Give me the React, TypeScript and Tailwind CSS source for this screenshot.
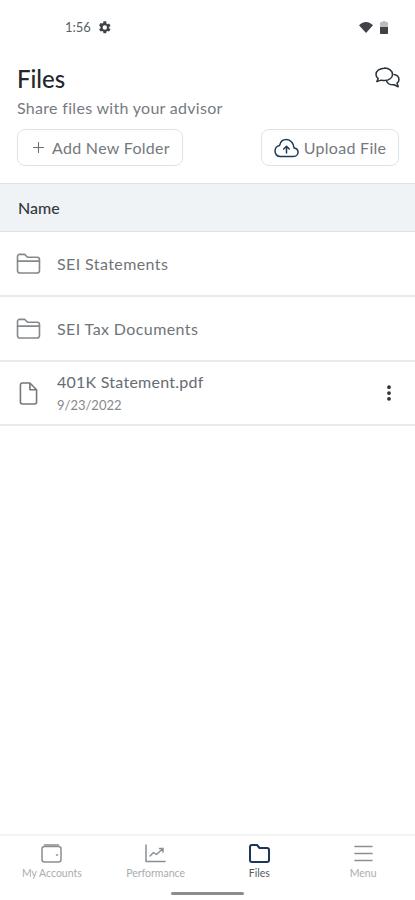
import { Plus, EllipsisVertical } from "lucide-react";

function FolderIcon({ className }: { className?: string }) {
  return (
    <svg className={className} viewBox="0 0 26 22" fill="none" stroke="currentColor" strokeWidth="1.7" strokeLinejoin="round" strokeLinecap="round">
      <path d="M1.5 3.5a2 2 0 0 1 2-2h5.5l3 3h10a2.5 2.5 0 0 1 2.5 2.5v11.5a2.5 2.5 0 0 1-2.5 2.5h-18a2.5 2.5 0 0 1-2.500-2.500z" />
      <path d="M1.5 8.5h23" />
    </svg>
  );
}

function FileIcon({ className }: { className?: string }) {
  return (
    <svg className={className} viewBox="0 0 20 25" fill="none" stroke="currentColor" strokeWidth="1.7" strokeLinejoin="round">
      <path d="M3.5 1.5h8l7 7v13a2 2 0 0 1-2 2h-13a2 2 0 0 1-2-2v-18a2 2 0 0 1 2-2z" />
      <path d="M11.5 1.5v7h7" />
    </svg>
  );
}

function ChatIcon() {
  return (
    <svg className="w-[27px] h-[22px] text-[#27323c]" viewBox="0 0 27 22" fill="none" stroke="currentColor" strokeWidth="1.5" strokeLinejoin="round" strokeLinecap="round">
      <path d="M10.5 1.2c-4.5 0-8.5 2.600-8.500 6.300 0 1.700.8 3.100 2.200 4.200L2.800 14.600l4.400-1.500c1 .3 2.100.5 3.300.5 4.500 0 8-2.800 8-6.200s-3.500-6.400-8-6.400z" />
      <path d="M20 7.500c2.900.6 5 2.500 5 5 0 1.500-.8 2.800-2 3.700l1.200 3.600-4.200-2c-3.300.3-6-.8-7.300-3.300" />
    </svg>
  );
}

function CloudIcon() {
  return (
    <svg className="w-[25px] h-[20px] text-[#1d3b57]" viewBox="0 0 25 20" fill="none" stroke="currentColor" strokeWidth="1.5" strokeLinejoin="round" strokeLinecap="round">
      <path d="M6 18.500h13.500c2.500 0 4.500-1.900 4.500-4.300 0-2.200-1.700-4-3.900-4.300C19.600 5.500 16.500 1.500 12.500 1.500c-3.500 0-6.200 2.600-6.900 5.900C3 7.800 1 10.200 1 13c0 3 2.200 5.500 5 5.500z" />
      <path d="M12.500 15V8.500M9.700 11l2.800-2.800 2.800 2.800" />
    </svg>
  );
}

function StatusBar() {
  return (
    <div className="h-[55px] flex items-center justify-between pl-[65px] pr-[27px] text-[#5a5f63]">
      <div className="flex items-center gap-[6px]">
        <span className="text-[13px]">1:56</span>
        <svg className="w-[15px] h-[15px] text-[#3f4347]" viewBox="0 0 24 24" fill="currentColor">
          <path fillRule="evenodd" d="M19.400 13a7.600 7.600 0 0 0 0-2l2.200-1.700-2.200-3.700-2.600 1a7.500 7.500 0 0 0-1.700-1L14.700 2h-4.400l-.4 2.700a7.500 7.500 0 0 0-1.700 1l-2.600-1-2.200 3.700L5.600 11a7.600 7.600 0 0 0 0 2l-2.200 1.700 2.200 3.700 2.600-1c.5.400 1.100.7 1.700 1l.4 2.700h4.400l.4-2.700c.6-.3 1.200-.6 1.700-1l2.600 1 2.200-3.700zM12.500 15.500a3.500 3.500 0 1 1 0-7 3.500 3.500 0 0 1 0 7z" />
        </svg>
      </div>
      <div className="flex items-center gap-[7px] text-[#3f4347]">
        <svg className="w-[14px] h-[11px]" viewBox="0 0 14 11" fill="currentColor">
          <path d="M0 3.200C1.800 1.300 4.300 0 7 0s5.200 1.300 7 3.200L7 11z" />
        </svg>
        <svg className="w-[8px] h-[13px]" viewBox="0 0 8 13" fill="currentColor">
          <path d="M2.500 0h3v1H7a1 1 0 0 1 1 1v10a1 1 0 0 1-1 1H1a1 1 0 0 1-1-1V2a1 1 0 0 1 1-1h1.500z" fillOpacity="0.35" />
          <path d="M0 6h8v6a1 1 0 0 1-1 1H1a1 1 0 0 1-1-1z" />
        </svg>
      </div>
    </div>
  );
}

function FolderRow({ name }: { name: string }) {
  return (
    <div className="h-[65px] flex items-center pl-[16px] border-b-2 border-[#e8eaec]">
      <FolderIcon className="w-[25px] h-[21px] text-[#85898c] mr-[16px]" />
      <span className="text-[16px] text-[#6f7478] tracking-[0.4px] pt-[1px]">{name}</span>
    </div>
  );
}

function NavItem({ label, active, children }: { label: string; active?: boolean; children: React.ReactNode }) {
  return (
    <div className="flex-1 flex flex-col items-center">
      <div className="h-[24px] flex items-center justify-center">{children}</div>
      <span className={active ? "mt-[1px] text-[10.5px] leading-[14px] text-[#555a5f]" : "mt-[1px] text-[10.5px] leading-[14px] text-[#a9acaf]"}>{label}</span>
    </div>
  );
}

export default function App() {
  return (
    <div className="w-[415px] h-[900px] bg-white flex flex-col font-['Lato',sans-serif] overflow-hidden">
      <StatusBar />

      <div className="px-[17px] pt-[8px]">
        <div className="flex items-start justify-between">
          <h1 className="text-[24px] leading-[32px] font-medium text-[#23282c]">Files</h1>
          <div className="mr-[-3px] mt-[4px]"><ChatIcon /></div>
        </div>
        <p className="mt-[3px] text-[16px] leading-[20px] text-[#767b80] tracking-[0.3px]">Share files with your advisor</p>
        <div className="mt-[11px] flex justify-between">
          <button className="h-[37px] w-[166px] flex items-center justify-center gap-[5px] rounded-[8px] border border-[#e0e3e5] text-[16px] text-[#74797d] tracking-[0.3px]">
            <Plus className="w-[17px] h-[17px] text-[#6a6f73]" strokeWidth={1.5} />
            Add New Folder
          </button>
          <button className="h-[37px] w-[138px] mr-[-1px] flex items-center justify-center gap-[5px] rounded-[8px] border border-[#e0e3e5] text-[16px] text-[#74797d] tracking-[0.3px]">
            <CloudIcon />
            Upload File
          </button>
        </div>
      </div>

      <div className="mt-[17px] h-[49px] flex items-center pl-[18px] pt-[1px] bg-[#eff3f5] border-y border-[#dfe3e6] text-[16px] font-medium text-[#33393e]">
        Name
      </div>

      <FolderRow name="SEI Statements" />
      <FolderRow name="SEI Tax Documents" />

      <div className="h-[64px] flex items-center pl-[19px] pr-[16px] border-b-2 border-[#e8eaec]">
        <FileIcon className="w-[19px] h-[25px] text-[#75797d] mr-[19px]" />
        <div className="flex-1 flex flex-col">
          <span className="text-[16px] leading-[20px] text-[#666c72] tracking-[0.25px]">401K Statement.pdf</span>
          <span className="mt-[4px] text-[13px] leading-[18px] text-[#85898d]">9/23/2022</span>
        </div>
        <EllipsisVertical className="w-[20px] h-[20px] text-[#2a2e32]" strokeWidth={2.5} />
      </div>

      <div className="flex-1" />

      <div className="h-[66px] flex flex-col border-t-2 border-[#f2f3f4] pt-[5px] relative">
        <div className="flex">
          <NavItem label="My Accounts">
            <svg className="w-[21px] h-[19px] text-[#8b8f92]" viewBox="0 0 21 19" fill="none" stroke="currentColor" strokeWidth="1.5" strokeLinejoin="round" strokeLinecap="round">
              <rect x="1" y="2.500" width="19" height="15.500" rx="2.500" />
              <path d="M3.500 1h14M15.500 11h1" />
            </svg>
          </NavItem>
          <NavItem label="Performance">
            <svg className="w-[21px] h-[19px] text-[#8b8f92]" viewBox="0 0 21 19" fill="none" stroke="currentColor" strokeWidth="1.500" strokeLinejoin="round" strokeLinecap="round">
              <path d="M1 1v16.500h19" />
              <path d="M5 12l3.500-3.500 3 2L18 4.500M14.500 4.500H18V8" />
            </svg>
          </NavItem>
          <NavItem label="Files" active>
            <svg className="w-[21px] h-[19px] text-[#1d3557]" viewBox="0 0 21 19" fill="none" stroke="currentColor" strokeWidth="2" strokeLinejoin="round" strokeLinecap="round">
              <path d="M1 3a2 2 0 0 1 2-2h5l2.500 3H18a2 2 0 0 1 2 2v10a2 2 0 0 1-2 2H3a2 2 0 0 1-2-2z" />
            </svg>
          </NavItem>
          <NavItem label="Menu">
            <svg className="w-[19px] h-[17px] text-[#8b8f92]" viewBox="0 0 19 17" fill="none" stroke="currentColor" strokeWidth="1.500" strokeLinecap="round">
              <path d="M1 1.500h17M1 8.500h17M1 15.500h17" />
            </svg>
          </NavItem>
        </div>
        <div className="absolute left-[171px] top-[56px] w-[73px] h-[3px] rounded-full bg-[#8a8d90]" />
      </div>
    </div>
  );
}
